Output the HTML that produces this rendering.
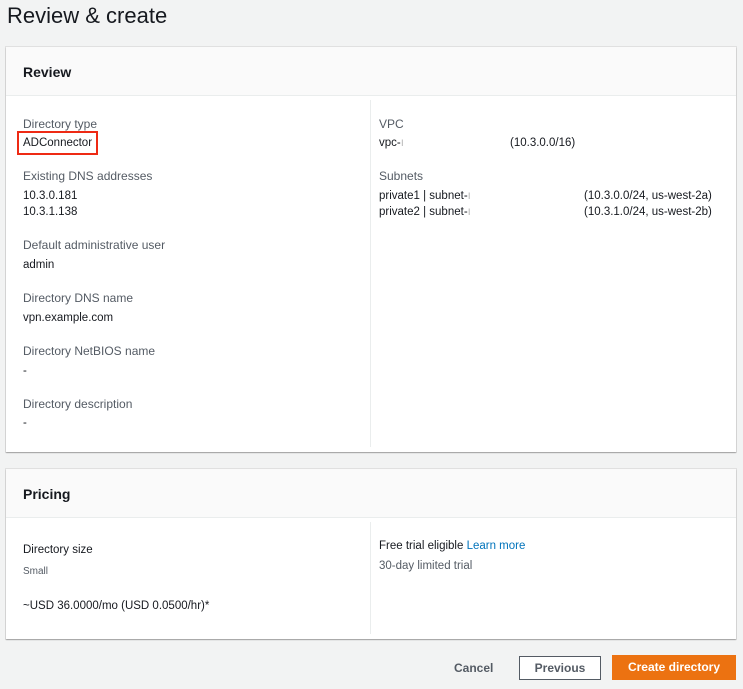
<!DOCTYPE html>
<html><head><style>
body{margin:0;width:743px;height:689px;background:#f2f3f3;font-family:"Liberation Sans",sans-serif;position:relative;overflow:hidden;color:#16191f}
.a{position:absolute;white-space:nowrap}
h1{position:absolute;left:7px;top:3px;margin:0;font-size:22px;font-weight:normal;color:#16191f}
.panel{position:absolute;left:6px;width:730px;background:#fff;box-shadow:0 1px 1px rgba(0,0,0,.3),0 0 0 1px #e0e0e0}
.hd{position:absolute;left:0;top:0;right:0;background:#fafafa;border-bottom:1px solid #eaeded}
.hd span{position:absolute;left:17px;font-size:14px;font-weight:bold}
.l{font-size:12px;color:#545b64}
.v{font-size:11.5px;color:#16191f}
.div{position:absolute;left:364px;width:1px;background:#eaeded}
</style></head><body>
<h1>Review &amp; create</h1>
<div class="panel" style="top:47px;height:405px">
 <div class="hd" style="height:48px"><span style="top:17px">Review</span></div>
 <div class="div" style="top:53px;height:347px"></div>
 <div class="a l" style="left:17px;top:70px">Directory type</div>
 <div class="a v" style="left:17px;top:90px">ADConnector</div>
 <div class="a" style="left:11px;top:84px;width:81px;height:24px;border:2px solid #ee2a14;box-sizing:border-box"></div>
 <div class="a l" style="left:17px;top:122px">Existing DNS addresses</div>
 <div class="a v" style="left:17px;top:143px">10.3.0.181</div>
 <div class="a v" style="left:17px;top:159px">10.3.1.138</div>
 <div class="a l" style="left:17px;top:191px">Default administrative user</div>
 <div class="a v" style="left:17px;top:212px">admin</div>
 <div class="a l" style="left:17px;top:244px">Directory DNS name</div>
 <div class="a v" style="left:17px;top:265px">vpn.example.com</div>
 <div class="a l" style="left:17px;top:297px">Directory NetBIOS name</div>
 <div class="a v" style="left:17px;top:318px">-</div>
 <div class="a l" style="left:17px;top:350px">Directory description</div>
 <div class="a v" style="left:17px;top:370px">-</div>
 <div class="a l" style="left:373px;top:70px">VPC</div>
 <div class="a v" style="left:373px;top:90px">vpc-<span style="color:#bbb">ı</span></div>
 <div class="a v" style="left:504px;top:90px">(10.3.0.0/16)</div>
 <div class="a l" style="left:373px;top:122px">Subnets</div>
 <div class="a v" style="left:373px;top:143px">private1 | subnet-<span style="color:#bbb">ı</span></div>
 <div class="a v" style="left:373px;top:159px">private2 | subnet-<span style="color:#bbb">ı</span></div>
 <div class="a v" style="left:578px;top:143px">(10.3.0.0/24, us-west-2a)</div>
 <div class="a v" style="left:578px;top:159px">(10.3.1.0/24, us-west-2b)</div>
</div>
<div class="panel" style="top:469px;height:170px">
 <div class="hd" style="height:48px"><span style="top:17px">Pricing</span></div>
 <div class="div" style="top:53px;height:112px"></div>
 <div class="a v" style="left:17px;top:75px">Directory size</div>
 <div class="a" style="left:17px;top:97px;font-size:10px;color:#545b64">Small</div>
 <div class="a v" style="left:17px;top:131px">~USD 36.0000/mo (USD 0.0500/hr)*</div>
 <div class="a v" style="left:373px;top:71px">Free trial eligible <span style="color:#0073bb">Learn more</span></div>
 <div class="a" style="left:373px;top:91px;font-size:11.5px;color:#545b64">30-day limited trial</div>
</div>
<div class="a" style="left:454px;top:661px;font-size:12px;font-weight:bold;color:#545b64">Cancel</div>
<div class="a" style="left:519px;top:656px;width:82px;height:24px;box-sizing:border-box;border:1px solid #545b64;background:#fff;font-size:12px;font-weight:bold;color:#545b64;text-align:center;line-height:22px">Previous</div>
<div class="a" style="left:612px;top:655px;width:124px;height:25px;background:#ec7211;font-size:12px;font-weight:bold;color:#fff;text-align:center;line-height:25px">Create directory</div>
</body></html>
